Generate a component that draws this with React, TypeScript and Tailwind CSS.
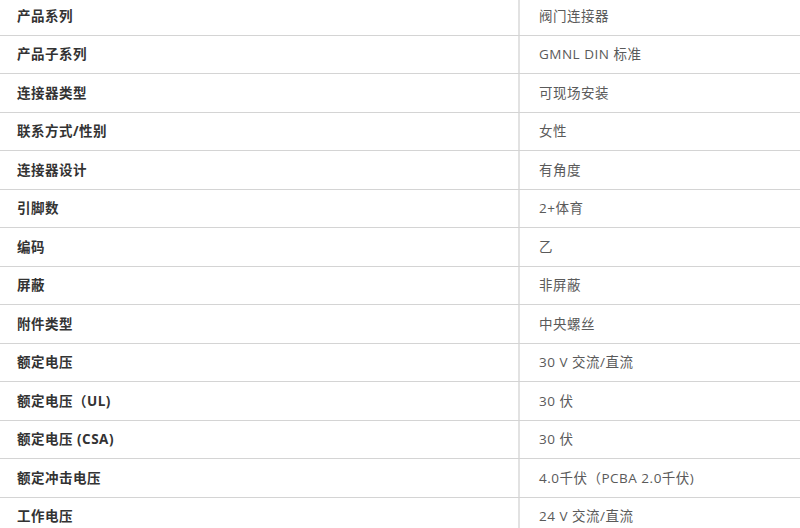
import React from 'react';

const specs: [string, string][] = [
  ['产品系列', '阀门连接器'],
  ['产品子系列', 'GMNL DIN 标准'],
  ['连接器类型', '可现场安装'],
  ['联系方式/性别', '女性'],
  ['连接器设计', '有角度'],
  ['引脚数', '2+体育'],
  ['编码', '乙'],
  ['屏蔽', '非屏蔽'],
  ['附件类型', '中央螺丝'],
  ['额定电压', '30 V 交流/直流'],
  ['额定电压（UL)', '30 伏'],
  ['额定电压 (CSA)', '30 伏'],
  ['额定冲击电压', '4.0千伏（PCBA 2.0千伏)'],
  ['工作电压', '24 V 交流/直流'],
];

const App = () => {
  return (
    <div className="w-[800px] h-[528px] overflow-hidden bg-white font-['Open_Sans','Noto_Sans_CJK_SC',sans-serif] text-[13.5px] tracking-[0.5px]">
      <div className="-mt-[3px]">
        {specs.map(([label, value]) => (
          <div key={label} className="flex h-[38.5px] border-b border-[#d4d4d4]">
            <div className="w-[520px] flex items-center pl-[17px] font-bold text-[#333] border-r-2 border-[#e2e2e2]">
              {label}
            </div>
            <div className="flex-1 flex items-center pl-[19px] text-[#5a5a5a]">{value}</div>
          </div>
        ))}
      </div>
    </div>
  );
};

export default App;
